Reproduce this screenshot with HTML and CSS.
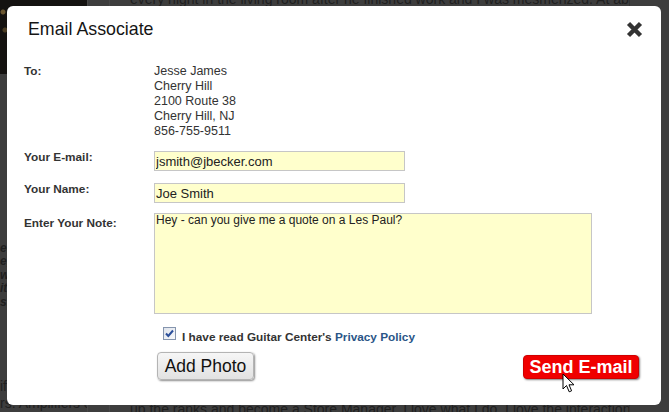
FILE: index.html
```html
<!DOCTYPE html>
<html lang="en">
<head>
<meta charset="utf-8">
<title>Email Associate</title>
<link rel="stylesheet" href="styles.css">
</head>
<body>
<div class="page">
  <aside class="side">
    <div class="side-img"></div>
    <div class="side-promo">
      <p>ee the full line</p>
      <p>e, guitars and</p>
      <p>wide selection</p>
      <p>ith great deals</p>
      <p>sic gear</p>
    </div>
    <div class="side-foot">
      <p>ifi cations</p>
      <p>rs. Amplifiers &amp;</p>
    </div>
  </aside>
  <div class="gutter"></div>
  <main class="article">
    <p class="a-top">every night in the living room after he finished work and I was mesmerized. At about 10</p>
    <p class="a-bot">up the ranks and become a Store Manager. I love what I do. I love the interactions with</p>
  </main>
  <div class="rail"></div>
</div>

<div class="modal" role="dialog" aria-label="Email Associate">
  <header class="modal-head">
    <h1 class="modal-title">Email Associate</h1>
    <button class="close" aria-label="Close">
      <svg width="17" height="17" viewBox="0 0 17 17"><path d="M2.5 2.5 L14.5 14.5 M14.5 2.5 L2.5 14.5" stroke="#333" stroke-width="4.4" stroke-linecap="butt" fill="none"/></svg>
    </button>
  </header>
  <form class="form">
    <div class="lbl lbl-to">To:</div>
    <div class="to-val">
      <div>Jesse James</div>
      <div>Cherry Hill</div>
      <div>2100 Route 38</div>
      <div>Cherry Hill, NJ</div>
      <div>856-755-9511</div>
    </div>

    <label class="lbl">Your E-mail:</label>
    <div><input class="field" type="text" value="jsmith@jbecker.com"></div>

    <label class="lbl">Your Name:</label>
    <div><input class="field" type="text" value="Joe Smith"></div>

    <label class="lbl lbl-note">Enter Your Note:</label>
    <div class="note-cell"><textarea class="note">Hey - can you give me a quote on a Les Paul?</textarea></div>

    <div class="agree">
      <span class="box"><svg width="11" height="11" viewBox="0 0 11 11"><path d="M2 5.5 L4.3 8 L9 2.5" stroke="#2b4f9a" stroke-width="2" fill="none"/></svg></span>
      <span class="agree-text">I have read Guitar Center's <a class="policy">Privacy Policy</a></span>
    </div>

    <div class="actions">
      <button type="button" class="btn-photo">Add Photo</button>
      <button type="button" class="btn-send">Send E-mail</button>
    </div>
  </form>
</div>

<svg class="cursor" width="14" height="21" viewBox="0 0 14 21"><path d="M1 1 L1 16 L4.5 12.5 L7.2 18.8 L9.6 17.8 L7 11.8 L12 11.8 Z" fill="#fff" stroke="#000" stroke-width="1" stroke-linejoin="miter"/></svg>
</body>
</html>
```
FILE: styles.css
```css
html, body {
  margin: 0;
  padding: 0;
}
body {
  width: 669px;
  height: 412px;
  overflow: hidden;
  background: #3d3d3d;
  font-family: "Liberation Sans", Arial, sans-serif;
  position: relative;
}
p { margin: 0; }

/* dimmed page behind the dialog */
.page {
  display: grid;
  grid-template-columns: 88px 22px 520px 1fr;
  height: 412px;
  overflow: hidden;
  color: #1f1f1f;
}
.side {
  display: flex;
  flex-direction: column;
  border-right: 1px solid #474747;
  white-space: nowrap;
  overflow: hidden;
}
.side-img {
  height: 80px;
  background:
    radial-gradient(circle at 3px 12px, #6a5630 0 2px, transparent 3px),
    radial-gradient(circle at 5px 30px, #4a3c22 0 2px, transparent 3px),
    #141210;
}
.side-promo {
  margin-top: 168px;
  font-size: 12px;
  line-height: 13.5px;
  font-weight: bold;
  font-style: italic;
}
.side-foot {
  margin-top: 69px;
  font-size: 14px;
  line-height: 17px;
}
.gutter {
  border-right: 1px solid #474747;
}
.article {
  display: flex;
  flex-direction: column;
  justify-content: space-between;
  padding-left: 20px;
  border-right: 1px solid #333;
  font-size: 14px;
  line-height: 16px;
  white-space: nowrap;
  overflow: hidden;
}
.a-top { margin-top: -9px; }
.a-bot { margin-bottom: -5px; }

/* dialog */
.modal {
  position: absolute;
  left: 7px;
  top: 6px;
  width: 654px;
  height: 399px;
  box-sizing: border-box;
  background: #fff;
  border-radius: 6px;
  padding: 12px 18px 0 17px;
  color: #333;
}
.modal-head {
  display: flex;
  justify-content: space-between;
  align-items: flex-start;
}
.modal-title {
  margin: 0 0 0 4px;
  font-size: 17.8px;
  line-height: 22px;
  font-weight: normal;
  color: #151515;
}
.close {
  margin-top: 3px;
  padding: 0;
  border: 0;
  background: none;
  width: 17px;
  height: 17px;
  display: block;
}
.close svg { display: block; }

.form {
  display: grid;
  grid-template-columns: 130px 1fr;
  row-gap: 12px;
  margin-top: 24px;
}
.lbl {
  font-size: 11.8px;
  line-height: 13px;
  font-weight: bold;
  color: #333;
}
.lbl-to { line-height: 15px; }
.lbl-note { padding-top: 2px; }
.to-val {
  font-size: 12.5px;
  line-height: 15px;
  color: #333;
}
.field {
  display: block;
  box-sizing: border-box;
  width: 251px;
  height: 20px;
  margin: 0;
  padding: 0 1px;
  border: 1px solid #c6c6c6;
  background: #ffffcc;
  font-family: "Liberation Sans", Arial, sans-serif;
  font-size: 13px;
  color: #222;
  outline: none;
}
.note-cell { margin-top: -2px; }
.note {
  display: block;
  box-sizing: border-box;
  width: 438px;
  height: 101px;
  margin: 0;
  padding: 0 1px;
  border: 1px solid #c6c6c6;
  background: #ffffcc;
  font-family: "Liberation Sans", Arial, sans-serif;
  font-size: 12px;
  line-height: 13px;
  color: #222;
  resize: none;
  outline: none;
}
.agree {
  grid-column: 2;
  display: flex;
  align-items: flex-start;
  gap: 6px;
  padding-left: 9px;
  margin-top: 1px;
}
.box {
  box-sizing: border-box;
  width: 13px;
  height: 13px;
  border: 1px solid #8595ae;
  background: linear-gradient(135deg, #dfe4ec, #f8f9fb);
  display: flex;
  align-items: center;
  justify-content: center;
}
.box svg { display: block; }
.agree-text {
  margin-top: 4px;
  font-size: 11.8px;
  line-height: 13px;
  font-weight: bold;
  color: #333;
}
.policy {
  color: #2a5587;
  text-decoration: none;
}
.actions {
  grid-column: 2;
  display: flex;
  justify-content: space-between;
  align-items: flex-start;
  margin-top: -4px;
  padding-left: 3px;
  margin-right: 4px;
}
.btn-photo {
  box-sizing: border-box;
  width: 97px;
  height: 28px;
  padding: 0;
  border: 1px solid #b4b4b4;
  border-radius: 4px;
  background: linear-gradient(#f6f6f6, #e2e2e2);
  box-shadow: 1px 1px 2px rgba(0, 0, 0, 0.45);
  font-family: "Liberation Sans", Arial, sans-serif;
  font-size: 17.5px;
  color: #111;
}
.btn-send {
  box-sizing: border-box;
  width: 116px;
  height: 24px;
  margin-top: 3px;
  padding: 0;
  border: 1px solid #d00000;
  border-radius: 4px;
  background: #f00000;
  box-shadow: 1px 1px 2px rgba(0, 0, 0, 0.5);
  font-family: "Liberation Sans", Arial, sans-serif;
  font-size: 18px;
  line-height: 22px;
  font-weight: bold;
  color: #fff;
}
.cursor {
  position: absolute;
  left: 562px;
  top: 373px;
}
```
